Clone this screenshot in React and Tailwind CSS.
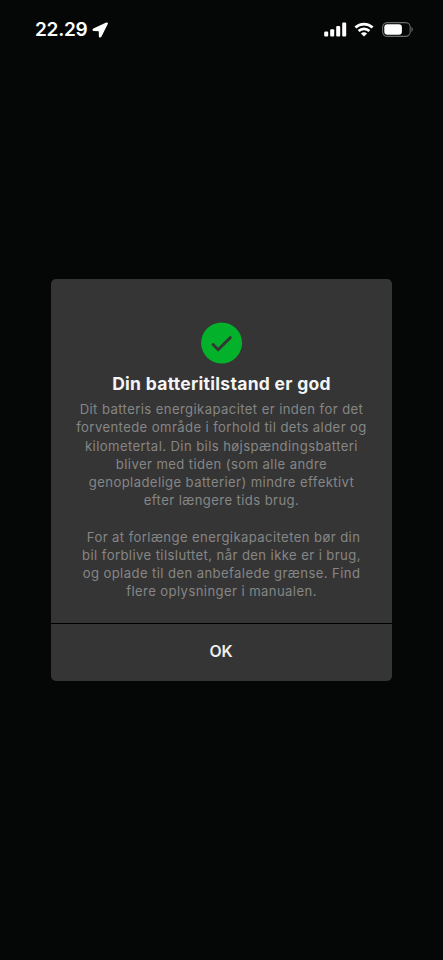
import React from 'react';

const paragraphs = [
  [
    'Dit batteris energikapacitet er inden for det',
    'forventede område i forhold til dets alder og',
    'kilometertal. Din bils højspændingsbatteri',
    'bliver med tiden (som alle andre',
    'genopladelige batterier) mindre effektivt',
    'efter længere tids brug.',
  ],
  [
    ' For at forlænge energikapaciteten bør din',
    'bil forblive tilsluttet, når den ikke er i brug,',
    'og oplade til den anbefalede grænse. Find',
    'flere oplysninger i manualen.',
  ],
];

function StatusBar() {
  return (
    <header className="flex h-[59px] shrink-0 items-center pl-[35px] pr-[29px] text-white">
      <span className="text-[19px] leading-6 font-semibold tracking-[-0.25px]">22.29</span>
      <svg className="ml-[5px] size-4" viewBox="0 0 16 16" fill="currentColor" stroke="currentColor" strokeWidth="1.3" strokeLinejoin="round">
        <path d="M14.5 1.2 1.6 7.2c-.7.4-.6 1.2.2 1.2l5.6.2.1 5.6c0 .8.9.9 1.3.2L15.2 1.8c.2-.5-.2-.8-.7-.6Z" />
      </svg>
      <div className="ml-auto flex items-center gap-[7px]">
        <svg className="h-[15px] w-[23px]" viewBox="0 0 23 15" fill="currentColor">
          <rect x="0.2" y="9.6" width="4" height="5" rx="1.1" />
          <rect x="6.2" y="7.2" width="4" height="7.4" rx="1.1" />
          <rect x="12.2" y="4" width="4" height="10.6" rx="1.1" />
          <rect x="18.2" y="0.6" width="4" height="14" rx="1.1" />
        </svg>
        <svg className="mr-px h-[15px] w-5" viewBox="0 0 20 15" fill="none" stroke="currentColor" strokeWidth="2.7">
          <path d="M1.4 5.5C6.2.9 13.8.9 18.6 5.5" />
          <path d="M4.6 9c3.1-2.9 7.7-2.9 10.8 0" />
          <path d="M10 14.6 6.9 11.4c1.7-1.5 4.5-1.5 6.2 0Z" fill="currentColor" stroke="none" />
        </svg>
        <svg className="h-[15px] w-8" viewBox="0 0 32 15">
          <rect x="0.6" y="0.6" width="27.6" height="13.8" rx="4.6" fill="none" stroke="#6b6b6b" strokeWidth="1.1" />
          <rect x="2.3" y="2.2" width="17.6" height="10.6" rx="3" fill="#fff" />
          <path d="M29.5 5.1c1.7.6 1.7 4.2 0 4.8Z" fill="#6b6b6b" />
        </svg>
      </div>
    </header>
  );
}

function BatteryDialog() {
  return (
    <section className="w-[340.5px] overflow-hidden rounded-[5px] bg-[#353535]">
      <div className="flex h-[344px] flex-col items-center pt-[43px]">
        <svg className="size-[42px] shrink-0" viewBox="0 0 42 42">
          <circle cx="20.6" cy="21" r="20.5" fill="#04b12b" />
          <path
            d="m12.1 22.6 5 5.1 12.2-12.1"
            fill="none"
            stroke="#353535"
            strokeWidth="2.9"
            strokeLinecap="round"
          />
        </svg>
        <h1 className="mt-2 text-[17.5px] leading-6 font-bold tracking-[0.29px] whitespace-nowrap text-[#f4f4f4]">
          Din batteritilstand er god
        </h1>
        <div className="mt-[4px] flex flex-col gap-[18.2px] text-center text-[13.1px] leading-[18.25px] tracking-[0.41px] text-[#868686]">
          {paragraphs.map((lines, i) => (
            <p key={i}>
              {lines.map((line) => (
                <span key={line} className="block whitespace-pre">
                  {line}
                </span>
              ))}
            </p>
          ))}
        </div>
      </div>
      <button className="flex h-[58px] w-full items-center justify-center border-t border-black pr-px pb-[2px] text-[15.8px] font-semibold text-[#eeeeee]">
        OK
      </button>
    </section>
  );
}

export default function App() {
  return (
    <div className="flex h-[960px] w-[443px] flex-col bg-[#050706] font-['Inter','Liberation_Sans',sans-serif]">
      <StatusBar />
      <main className="flex flex-1 justify-center pt-[220px]">
        <div>
          <BatteryDialog />
        </div>
      </main>
    </div>
  );
}
